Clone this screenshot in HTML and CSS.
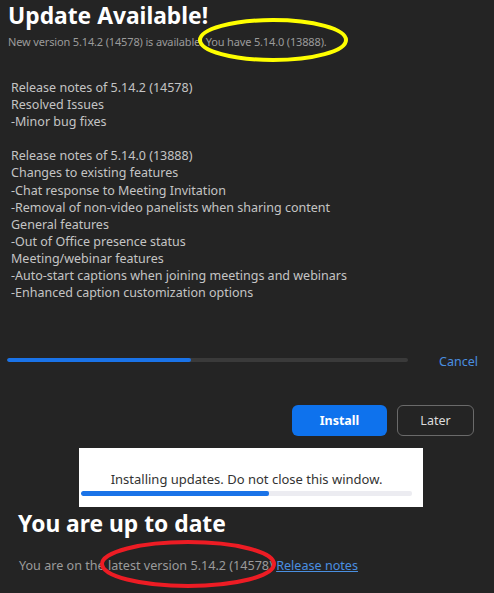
FILE: index.html
```html
<!DOCTYPE html>
<html>
    <head>
        <meta charset="UTF-8" />
        <title>Update Available</title>
        <link rel="stylesheet" href="styles.css">
    </head>
    <body>
        <div class="page">
            <div id="update">
                <h1 class="title">Update Available!</h1>
                <p class="sub">New version 5.14.2 (14578) is available. You have 5.14.0 (13888).</p>

                <div class="notes">
                    <div>Release notes of 5.14.2 (14578)</div>
                    <div>Resolved Issues</div>
                    <div>-Minor bug fixes</div>
                    <div>&nbsp;</div>
                    <div>Release notes of 5.14.0 (13888)</div>
                    <div>Changes to existing features</div>
                    <div>-Chat response to Meeting Invitation</div>
                    <div>-Removal of non-video panelists when sharing content</div>
                    <div>General features</div>
                    <div>-Out of Office presence status</div>
                    <div>Meeting/webinar features</div>
                    <div>-Auto-start captions when joining meetings and webinars</div>
                    <div>-Enhanced caption customization options</div>
                </div>

                <div class="progress-row">
                    <div class="track"><div class="fill" style="width:184px"></div></div>
                    <a class="cancel">Cancel</a>
                </div>

                <div class="buttons">
                    <button class="btn btn-install">Install</button>
                    <button class="btn btn-later">Later</button>
                </div>
            </div>

            <div id="installing">
                <p>Installing updates. Do not close this window.</p>
                <div class="track light"><div class="fill" style="width:188px"></div></div>
            </div>

            <div id="uptodate">
                <h2 class="title2">You are up to date</h2>
                <p class="latest">You are on the latest version 5.14.2 (14578) <a class="link">Release notes</a></p>
            </div>

            <svg class="marks" width="494" height="593" viewBox="0 0 494 593">
                <ellipse cx="273" cy="40" rx="73" ry="20" fill="none" stroke="#ffff00" stroke-width="4"/>
                <ellipse cx="188" cy="564" rx="86" ry="22" fill="none" stroke="#ed1c24" stroke-width="4"/>
            </svg>
        </div>
    </body>
</html>
```

FILE: styles.css
```css
html, body {
    margin: 0;
    padding: 0;
    background-color: #242424;
}

body {
    font-family: "Noto Sans", "Open Sans", sans-serif;
    color: #c8c8c8;
}

.page {
    position: relative;
    width: 494px;
    height: 593px;
    overflow: hidden;
}

.title {
    margin: 0;
    padding: 1px 0 0 8px;
    font-size: 22.8px;
    line-height: 30px;
    font-weight: bold;
    color: #ffffff;
}

.sub {
    margin: 3px 0 0 8px;
    font-size: 11px;
    letter-spacing: -0.15px;
    line-height: 16px;
    color: #9b9b9b;
}

.notes {
    margin-top: 29px;
    padding-left: 11px;
    font-size: 12.5px;
    line-height: 17.1px;
    color: #c4c4c4;
}

.progress-row {
    display: flex;
    align-items: center;
    margin-top: 49px;
    padding-left: 7px;
    height: 20px;
}

.track {
    width: 401px;
    height: 4px;
    border-radius: 2px;
    background-color: #3a3a3a;
    overflow: hidden;
}

.fill {
    height: 100%;
    border-radius: 2px;
    background-color: #1a73e8;
}

.cancel {
    margin-left: 31px;
    padding-top: 2px;
    font-size: 12.5px;
    color: #4a8fe0;
}

.buttons {
    display: flex;
    gap: 10px;
    margin-top: 35px;
    padding-left: 292px;
}

.btn {
    height: 31px;
    border-radius: 6px;
    font-family: "Noto Sans", "Open Sans", sans-serif;
    font-size: 12.5px;
    padding: 0;
}

.btn-install {
    width: 95px;
    border: 0px;
    background-color: #0e72ed;
    color: white;
    font-weight: bold;
}

.btn-later {
    width: 77px;
    border: 1px solid #6a6a6a;
    background-color: #242424;
    color: #dcdcdc;
}

#installing {
    margin: 12px 0 0 79px;
    width: 344px;
    height: 59px;
    background-color: white;
    box-sizing: border-box;
    padding: 22px 11px 0 2px;
}

#installing p {
    margin: 0;
    text-align: center;
    font-size: 13px;
    line-height: 18px;
    color: #333333;
}

.track.light {
    width: 331px;
    height: 5px;
    margin-top: 3px;
    background-color: #ececf1;
}

#uptodate {
    padding-left: 18px;
}

.title2 {
    margin: 2px 0 0 0;
    font-size: 22.8px;
    line-height: 30px;
    font-weight: bold;
    color: #ffffff;
}

.latest {
    margin: 18px 0 0 1px;
    font-size: 12.6px;
    line-height: 18px;
    color: #9b9b9b;
}

.link {
    color: #4a8fe0;
    text-decoration: underline;
}

.marks {
    position: absolute;
    left: 0;
    top: 0;
    pointer-events: none;
}
```
